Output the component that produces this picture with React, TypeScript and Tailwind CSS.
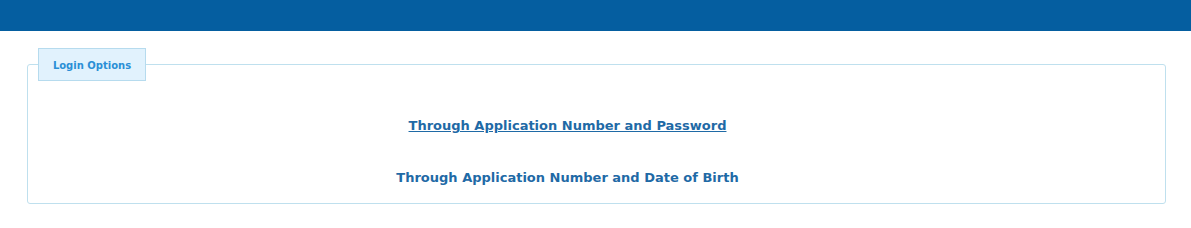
export default function App() {
  return (
    <div className="min-h-screen bg-white" style={{ fontFamily: '"DejaVu Sans", Verdana, sans-serif' }}>
      <div className="h-[31px] bg-[#055ea0]" />
      <div className="pl-[27px] pr-[25px] pt-[17px]">
        <fieldset className="border border-[#bfe0ee] rounded-[3px] px-[10px] pb-[16px] m-0 min-w-0">
          <legend className="ml-0 h-[33px] w-[108px] border border-[#b6dbee] bg-[#e1f2fd] text-[10px] font-bold text-[#2a8fd6] flex items-center justify-center p-0 pt-[2px]">
            Login Options
          </legend>
          <div className="flex flex-col items-center pt-[36px] gap-[34px] pr-[58px]">
            <a href="#" className="text-[13px] font-bold text-[#1f6aa6] underline leading-[18px]">
              Through Application Number and Password
            </a>
            <span className="text-[13px] font-bold text-[#1f6aa6] leading-[18px]">
              Through Application Number and Date of Birth
            </span>
          </div>
        </fieldset>
      </div>
    </div>
  );
}
